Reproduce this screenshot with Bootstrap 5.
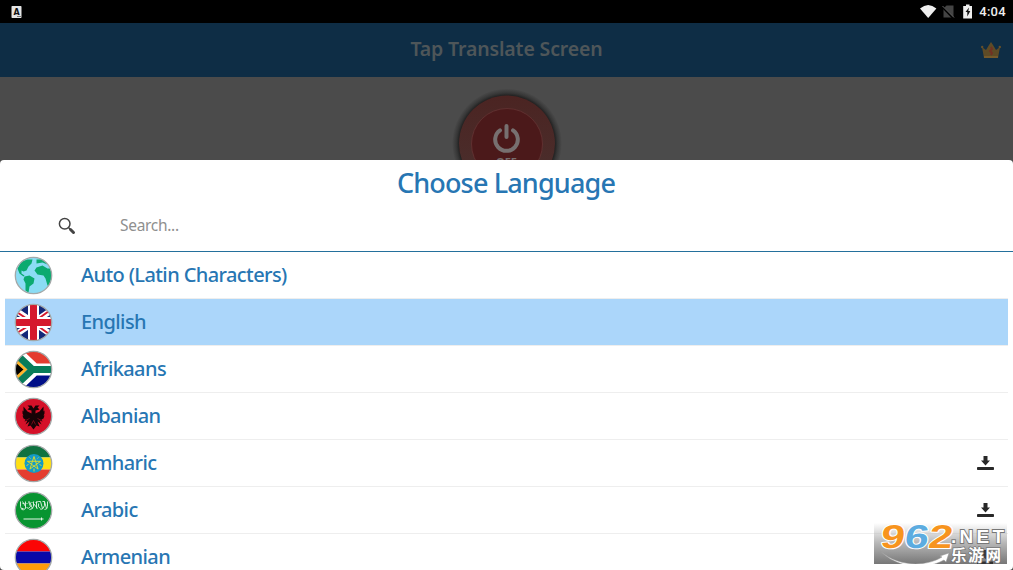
<!DOCTYPE html>
<html lang="en">
<head>
    <meta charset="UTF-8" />
    <meta name="viewport" content="width=device-width, initial-scale=1" />
    <title>Tap Translate Screen</title>
    <!-- Bootstrap 5 CSS -->
    <link
            href="https://cdn.jsdelivr.net/npm/bootstrap@5.3.0/dist/css/bootstrap.min.css"
            rel="stylesheet"
    />
    <style>
        body {
          background: #4b4b4b;
          font-family: "Noto Sans", "Open Sans", sans-serif;
        }
        svg { display: block; flex-shrink: 0; }
        .status-bar, .app-bar, .power-area, .sheet-title, .search-bar { flex-shrink: 0; }
        .status-bar { height: 23px; background: #000; padding: 0 7px 0 11px; }
        .status-time { font: 500 13px/23px Roboto, sans-serif; color: #eee; letter-spacing: .3px; margin-left: 6px; }
        .app-bar { height: 54px; background: #0e2d45; color: #4e5659; padding-right: 12px; }
        .app-title { font-size: 19.5px; font-weight: 600; line-height: 50px; height: 52px; letter-spacing: -.15px; padding-right: 4px; }
        .side-slot { width: 20px; }
        .power-area { height: 82.5px; }
        .sheet { background: #fff; border-radius: 4px; flex: 1 1 0; min-height: 0; }
        .sheet-title { color: #2776b3; font-size: 27px; font-weight: 500; line-height: 46px; height: 45.5px; margin: 0; letter-spacing: -.85px; padding-right: 1px; }
        .search-bar { height: 47px; border-bottom: 1px solid #24709c; padding: 0 10px 5px 58px; }
        .search-input, .search-input:focus { border: 0; background: none; box-shadow: none; font-size: 15.5px; color: #999; padding: 1px 0 0; margin-left: 44px; letter-spacing: -.3px; }
        .search-input::placeholder { color: #8f8f8f; }
        .lang-list { margin: 0 5px; }
        .lang-item { height: 47px; flex-shrink: 0; padding: 0 14px 0 9px; border-bottom: 1px solid #eee; color: #2776b3; }
        .lang-item.selected { background: #abd6fa; }
        .lang-flag { margin-top: 1px; }
        .lang-name { margin-left: 28px; font-size: 20px; font-weight: 500; line-height: 46px; letter-spacing: -.6px; }
        .site-stamp { right: 6px; bottom: 6px; width: 133px; height: 41px; background: linear-gradient(#f8f8f800, #b5b5b5 50%, #777); }
    </style>
</head>
<body class="vh-100 overflow-hidden d-flex flex-column position-relative">

<!-- Status bar -->
<div class="status-bar d-flex align-items-center">
    <svg width="11" height="12" viewBox="0 0 11 12">
        <rect x=".5" width="10" height="12" rx=".7" fill="#e4e4e4"/>
        <text x="5.500" y="9" text-anchor="middle" font-family="DejaVu Sans" font-weight="bold" font-size="8" fill="#111">A</text>
        <path d="M6 10.500h4" stroke="#777"/>
    </svg>
    <svg class="ms-auto" width="53" height="16" viewBox="0 0 53 16">
        <path d="M0 4.500Q8.200-2.500 16.400 4.500L8.200 14Z" fill="#eee"/>
        <path d="M26.500 1.500H33.500V13.500H23.500V4.500Z" fill="#444"/>
        <path d="M22.500 3 33.500 14.500" stroke="#000" stroke-width="2"/>
        <path d="M22.500 2 34 13.500" stroke="#666"/>
        <path d="M46 .5h3.500V2H52v12.500h-8.800V2H46Z" fill="#eee"/>
        <path d="M49 3.500 45.500 8h1.800v4.500l3-5.500h-2Z" fill="#111"/>
    </svg>
    <span class="status-time">4:04</span>
</div>

<!-- App bar -->
<div class="app-bar d-flex align-items-center">
    <div class="side-slot ms-3"></div>
    <div class="app-title flex-grow-1 text-center">Tap Translate Screen</div>
    <svg width="20" height="17" viewBox="0 0 20 17">
        <path d="M1 5l4 3 3-5 2-3 2 3 3 5 4-3-2 11H3Z" fill="#5e4b26"/>
        <path d="M3 14h14v2H3Z" fill="#755a2b"/>
        <circle cx="1.200" cy="5" r="1.200" fill="#66502a"/><circle cx="18.800" cy="5" r="1.200" fill="#66502a"/>
        <path d="M10 5l1 2-2 2 2 2-1 2" fill="none" stroke="#732f22" stroke-width="1.800"/>
    </svg>
</div>

<!-- Power button, lower part covered by the sheet -->
<div class="power-area d-flex justify-content-center overflow-hidden">
    <svg width="130" height="84" viewBox="0 0 130 84">
        <defs>
            <radialGradient id="glow"><stop offset=".86" stop-color="#1c1c1c"/><stop offset=".92" stop-color="#363636"/><stop offset="1" stop-color="#4b4b4b"/></radialGradient>
            <linearGradient id="ring" x2="0" y2="1"><stop stop-color="#4b2422"/><stop offset="1" stop-color="#4a302e"/></linearGradient>
        </defs>
        <circle cx="65" cy="66.500" r="55" fill="url(#glow)"/>
        <circle cx="65" cy="66.500" r="48" fill="url(#ring)"/>
        <circle cx="65" cy="67" r="35.500" fill="#4b191a" stroke="#643433" stroke-width=".8"/>
        <path d="M58 53.300a11.300 11.300 0 1 0 13 0" fill="none" stroke="#777070" stroke-width="4" stroke-linecap="round"/>
        <path d="M64.500 49v11" stroke="#777070" stroke-width="4" stroke-linecap="round"/>
        <text x="64.500" y="88.500" text-anchor="middle" font-family="Noto Sans" font-weight="bold" font-size="11" fill="#776d6d">OFF</text>
    </svg>
</div>

<!-- Language sheet -->
<div class="sheet d-flex flex-column overflow-hidden">
    <h1 class="sheet-title text-center">Choose Language</h1>
    <div class="search-bar d-flex align-items-center">
        <svg width="18" height="18" viewBox="0 0 18 18">
            <circle cx="6.700" cy="6.700" r="5.300" fill="none" stroke="#444" stroke-width="1.500"/>
            <path d="m10.500 10.500 1.500 1.500" stroke="#444" stroke-width="1.500"/>
            <path d="m12.500 12.500 3 3" stroke="#444" stroke-width="3" stroke-linecap="round"/>
        </svg>
        <input type="text" class="search-input form-control" placeholder="Search..." aria-label="Search" />
    </div>
    <div class="lang-list d-flex flex-column overflow-hidden" id="lang-list">
        <!-- Languages are added here -->
    </div>
</div>

<!-- Site stamp over the list corner -->
<div class="site-stamp position-absolute">
    <svg width="133" height="41" viewBox="0 0 133 41">
        <path d="M109 27h5v4h3l-5.500 5-5.500-5h3ZM103 38.500h16v2.500h-16Z" fill="#333"/>
        <g transform="translate(5 0) skewX(-8)" font-family="Liberation Sans" font-weight="bold" font-size="33" stroke="#fff" stroke-width="2" paint-order="stroke" stroke-linejoin="round">
            <text x="4" y="25" fill="#f7941e" textLength="24" lengthAdjust="spacingAndGlyphs">9</text>
            <text x="28" y="25" fill="#5cace0" textLength="24" lengthAdjust="spacingAndGlyphs">6</text>
            <text x="52" y="25" fill="#f7941e" textLength="24" lengthAdjust="spacingAndGlyphs">2</text>
        </g>
        <text x="77" y="19.500" font-family="Liberation Sans" font-weight="bold" font-size="19" fill="#fff" stroke="#777" stroke-width="1.800" paint-order="stroke" textLength="53">.NET</text>
        <path d="M6 28C24 44 52 44 68 34l-2-1 9-3-3 9-2-2C50 48 24 45 6 28Z" fill="#fff" stroke="#999" stroke-width=".5"/>
        <text x="77" y="37.500" font-family="Noto Sans CJK SC" font-weight="bold" font-size="15.500" fill="#fff" stroke="#777" stroke-width="1.500" paint-order="stroke" textLength="50">乐游网</text>
    </svg>
</div>

<!-- Bootstrap 5 JS -->
<script src="https://cdn.jsdelivr.net/npm/bootstrap@5.3.0/dist/js/bootstrap.bundle.min.js"></script>

<script>
    // Flag artwork, drawn in a 38x38 box and clipped to a circle
    const flags = {
      auto: `<path d="M0 0h38v38H0Z" fill="#8bdcf4"/>
        <path d="M3 12 7 5l6-2 5 0-1 4-3 3-2 4-3 1-2-1v3l3 2-1 1-4-3Z" fill="#0baa70"/>
        <path d="M10 20l5-1 5 3-1 5-4 3-1 6-3-2V27l-2-4Z" fill="#0baa70"/>
        <path d="M22 3l8 0 3 5-5-2-6 1ZM22 11l6-2 5 3 4 0 2 10-3 8-3-1-2-7-2-3-6-1-3-4Z" fill="#0baa70"/>`,
      english: `<path d="M0 0h38v38H0Z" fill="#142879"/>
        <path d="M0 6 38 32M38 6 0 32" stroke="#fff" stroke-width="6"/>
        <path d="M0 7 18 19M38 5 20 18M20 20 38 33M18 20 0 31" stroke="#d5192d" stroke-width="2"/>
        <path d="M19 0v38M0 19h38" stroke="#fff" stroke-width="11"/>
        <path d="M19 0v38M0 19h38" stroke="#d5192d" stroke-width="7"/>`,
      afrikaans: `<path d="M0 0h38v15H0Z" fill="#e43c2f"/><path d="M0 23h38v15H0Z" fill="#000f88"/>
        <path d="M3 3 20 19H40M3 35 20 19" fill="none" stroke="#fff" stroke-width="12"/>
        <path d="M-3 3V35L12 19Z" fill="#000"/>
        <path d="M-1 8 11 19-1 30" fill="none" stroke="#fcb52c" stroke-width="3"/>
        <path d="M1 3 18 19H40M1 35 18 19" fill="none" stroke="#087c59" stroke-width="7"/>`,
      albanian: `<path d="M0 0h38v38H0Z" fill="#d51129"/>
        <path d="M19 11l-2-3-4 0 2 2-2 2 4 1v3l-4-2-4-5v5l-1-1 0 3 1 2-1 0 1 3 2 1-1 2 3-1-2 4 4-3-2 5 3-1 3 4 3-4 3 1-2-5 4 3-2-4 3 1-1-2 2-1 1-3-1 0 1-2 0-3-1 1v-5l-4 5-4 2v-3l4-1-2-2 2-2-4 0Z" fill="#170306"/>
        <path d="M15 21l-4 2M23 21l4 2M17 27l2-4 2 4" fill="none" stroke="#9a1020" stroke-width=".7"/>`,
      amharic: `<path d="M0 0h38v13H0Z" fill="#107240"/><path d="M0 13h38v12H0Z" fill="#ffe015"/><path d="M0 25h38v13H0Z" fill="#e43d30"/>
        <circle cx="19.500" cy="19" r="9.500" fill="#149bc7"/>
        <path d="M19.500 12 23.600 24.600 12.900 16.800H26.100L15.400 24.600Z" fill="none" stroke="#d9d92d" stroke-width="1"/>
        <path d="M15 13l1 1M24 13l-1 1M12 21l2-1M27 21l-2-1M19.500 24v3" stroke="#d9d92d"/>`,
      arabic: `<path d="M0 0h38v38H0Z" fill="#089431"/>
        <path d="M6 10v5q0 3 3 2M8 10l3 5M11 10v7q-2 2-4 1M12 16q2 2 4-1l-2-5M15 10l3 7M19 10v5q-1 3-4 3M19 12l4 5M22 10v7M21 11l3-1M24 12q-1 4 2 5M26 10l2 7M28 10h2v4q-1 4-4 4M30 10l2 7M33 10v5q0 3-3 3M8 12h2M17 11h1M24 10h2M12 12h1" fill="none" stroke="#e5f4e8" stroke-width=".9"/>
        <path d="M9 27.500H29M27 26v3" stroke="#e5f4e8"/>`,
      armenian: `<path d="M0 0h38v13H0Z" fill="#fb0505"/><path d="M0 13h38v12H0Z" fill="#0808a8"/><path d="M0 25h38v13H0Z" fill="#ff9c0a"/>`
    };

    const languages = [
      { code: "auto", name: "Auto (Latin Characters)" },
      { code: "english", name: "English", selected: true },
      { code: "afrikaans", name: "Afrikaans" },
      { code: "albanian", name: "Albanian" },
      { code: "amharic", name: "Amharic", download: true },
      { code: "arabic", name: "Arabic", download: true },
      { code: "armenian", name: "Armenian", download: true }
    ];

    const downloadIcon = `
      <svg class="ms-auto" width="17" height="14" viewBox="0 0 17 14">
        <path d="M6.500 0h4v4.500h2.500L8.500 9.500 4 4.500h2.500Z" fill="#282828"/>
        <rect y="11" width="17" height="3" rx=".8" fill="#282828"/>
      </svg>`;

    // Render one row for each language
    const langList = document.getElementById("lang-list");
    languages.forEach(lang => {
      const row = document.createElement("div");
      row.className = "lang-item d-flex align-items-center" + (lang.selected ? " selected" : "");
      row.innerHTML = `
        <svg class="lang-flag" width="39" height="39" viewBox="-.5 -.5 39 39">
          <clipPath id="clip-${lang.code}"><circle cx="19" cy="19" r="18"/></clipPath>
          <g clip-path="url(#clip-${lang.code})">${flags[lang.code]}</g>
          <circle cx="19" cy="19" r="18.200" fill="none" stroke="#a3a8a8" stroke-width="1.300"/>
        </svg>
        <span class="lang-name">${lang.name}</span>
        ${lang.download ? downloadIcon : ""}
      `;
      langList.appendChild(row);
    });
</script>
</body>
</html>
